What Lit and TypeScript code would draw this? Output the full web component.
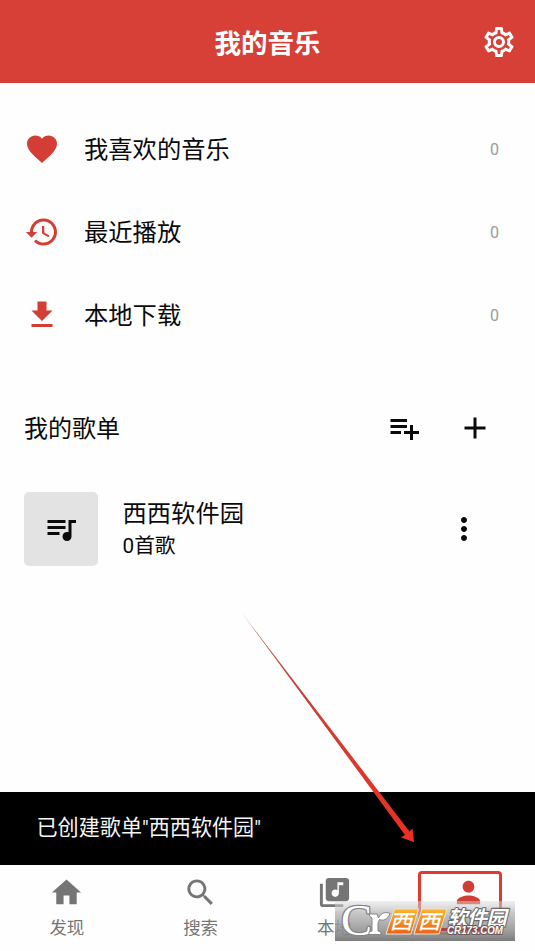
import { LitElement, html, css, svg } from "lit";
import { customElement, property } from "lit/decorators.js";

const ICONS: Record<string, string> = {
  cog: "M12,8A4,4 0 0,1 16,12A4,4 0 0,1 12,16A4,4 0 0,1 8,12A4,4 0 0,1 12,8M12,10A2,2 0 0,0 10,12A2,2 0 0,0 12,14A2,2 0 0,0 14,12A2,2 0 0,0 12,10M10,22C9.75,22 9.54,21.82 9.5,21.58L9.13,18.93C8.5,18.68 7.96,18.34 7.44,17.94L4.95,18.95C4.73,19.03 4.46,18.95 4.34,18.73L2.34,15.27C2.21,15.05 2.27,14.78 2.46,14.63L4.57,12.97L4.5,12L4.57,11L2.46,9.37C2.27,9.22 2.21,8.95 2.34,8.73L4.34,5.27C4.46,5.05 4.73,4.96 4.95,5.05L7.44,6.05C7.96,5.66 8.5,5.32 9.13,5.07L9.5,2.42C9.54,2.18 9.75,2 10,2H14C14.25,2 14.46,2.18 14.5,2.42L14.87,5.07C15.5,5.32 16.04,5.66 16.56,6.05L19.05,5.05C19.27,4.96 19.54,5.05 19.66,5.27L21.66,8.73C21.79,8.95 21.73,9.22 21.54,9.37L19.43,11L19.5,12L19.43,13L21.54,14.63C21.73,14.78 21.79,15.05 21.66,15.27L19.66,18.73C19.54,18.95 19.27,19.04 19.05,18.95L16.56,17.95C16.04,18.34 15.5,18.68 14.87,18.93L14.5,21.58C14.46,21.82 14.25,22 14,22H10M11.25,4L10.88,6.61C9.68,6.86 8.62,7.5 7.85,8.39L5.44,7.35L4.69,8.65L6.8,10.2C6.4,11.37 6.4,12.64 6.8,13.8L4.68,15.36L5.43,16.66L7.86,15.62C8.63,16.5 9.68,17.14 10.87,17.38L11.24,20H12.76L13.13,17.39C14.32,17.14 15.37,16.5 16.14,15.62L18.57,16.66L19.32,15.36L17.2,13.81C17.6,12.64 17.6,11.37 17.2,10.2L19.31,8.65L18.56,7.35L16.15,8.39C15.38,7.5 14.32,6.86 13.12,6.62L12.75,4H11.25Z",
  heart: "M12 21.35l-1.45-1.32C5.4 15.36 2 12.28 2 8.5 2 5.42 4.42 3 7.5 3c1.74 0 3.41.81 4.5 2.09C13.09 3.81 14.76 3 16.5 3 19.58 3 22 5.42 22 8.5c0 3.78-3.4 6.86-8.55 11.54L12 21.35z",
  history: "M13 3c-4.97 0-9 4.03-9 9H1.2l3.7 3.7.07.14L8.8 12H6c0-3.87 3.13-7 7-7s7 3.13 7 7-3.13 7-7 7c-1.93 0-3.68-.79-4.94-2.06l-1.42 1.42C8.27 19.99 10.51 21 13 21c4.97 0 9-4.03 9-9s-4.03-9-9-9zm-1 5v5l4.28 2.54.72-1.21-3.5-2.08V8H12z",
  download: "M19 9h-4V3H9v6H5l7 7 7-7zM5 18v2h14v-2H5z",
  playlistAdd: "M14 10H3v2h11v-2zm0-4H3v2h11V6zm4 8v-4h-2v4h-4v2h4v4h2v-4h4v-2h-4zM3 16h7v-2H3v2z",
  add: "M19 13h-6v6h-2v-6H5v-2h6V5h2v6h6v2z",
  queue: "M15 6H3v2h12V6zm0 4H3v2h12v-2zM3 16h8v-2H3v2zM17 6v8.18c-.31-.11-.65-.18-1-.18-1.66 0-3 1.34-3 3s1.34 3 3 3 3-1.34 3-3V8h3V6h-5z",
  more: "M12 8c1.1 0 2-.9 2-2s-.9-2-2-2-2 .9-2 2 .9 2 2 2zm0 2c-1.1 0-2 .9-2 2s.9 2 2 2 2-.9 2-2-.9-2-2-2zm0 6c-1.1 0-2 .9-2 2s.9 2 2 2 2-.9 2-2-.9-2-2-2z",
  home: "M10 20v-6h4v6h5v-8h3L12 3 2 12h3v8z",
  search: "M15.5 14h-.79l-.28-.27C15.41 12.59 16 11.11 16 9.5 16 5.91 13.09 3 9.5 3S3 5.91 3 9.5 5.91 16 9.5 16c1.61 0 3.09-.59 4.23-1.57l.27.28v.79l5 4.99L20.49 19l-4.99-5zm-6 0C7.01 14 5 11.99 5 9.5S7.01 5 9.5 5 14 7.01 14 9.5 11.99 14 9.5 14z",
  library: "M20 2H8c-1.1 0-2 .9-2 2v12c0 1.1.9 2 2 2h12c1.1 0 2-.9 2-2V4c0-1.1-.9-2-2-2zm-2 5h-3v5.5c0 1.38-1.12 2.5-2.5 2.5S10 13.88 10 12.5s1.12-2.5 2.5-2.5c.57 0 1.08.19 1.5.51V5h4v2zM4 6H2v14c0 1.1.9 2 2 2h14v-2H4V6z",
  person: "M12 12c2.21 0 4-1.79 4-4s-1.79-4-4-4-4 1.79-4 4 1.79 4 4 4zm0 2c-2.67 0-8 1.34-8 4v2h16v-2c0-2.66-5.33-4-8-4z",
};

@customElement("md-icon")
class MdIcon extends LitElement {
  @property() name = "";
  static styles = css`
    :host { display: block; width: 36px; height: 36px; flex: none; }
    svg { display: block; width: 100%; height: 100%; fill: currentColor; }
  `;
  render() {
    return html`<svg viewBox="0 0 24 24">${svg`<path d=${ICONS[this.name] ?? ""}></path>`}</svg>`;
  }
}

@customElement("site-mark")
class SiteMark extends LitElement {
  static styles = css`
    :host { display: block; width: 180px; height: 40px; }
    svg { display: block; overflow: visible; }
    text { paint-order: stroke; stroke-linejoin: round; }
    .cjk { font-family: "Noto Sans CJK SC", sans-serif; font-weight: 700; }
    .c { font: 45px "Liberation Serif", serif; fill: #fff; stroke: #858585; stroke-width: 2.6px; }
    .r { fill: #fff; stroke: #858585; stroke-width: 1px; stroke-linejoin: round; }
    .plate { fill: url(#orange); stroke: #f4e5d2; stroke-width: 1; }
    .xi { font-size: 20px; font-weight: 500; fill: #fff; }
    .soft { font-size: 20px; fill: #fff; stroke: #696969; stroke-width: 2.2px; }
    .site { font: italic bold 10px "Liberation Sans", sans-serif; fill: #fff; stroke: #6b5555; stroke-width: 1.8px; }
  `;
  render() {
    return html`
      <svg width="180" height="40" viewBox="0 0 180 40">
        <defs>
          <linearGradient id="shade" x1="0" y1="0" x2="0" y2="1">
            <stop offset="0" stop-color="#ddd" stop-opacity=".45"></stop>
            <stop offset=".3" stop-color="#b4b4b4" stop-opacity=".75"></stop>
            <stop offset=".75" stop-color="#8c8c8c" stop-opacity=".85"></stop>
            <stop offset="1" stop-color="#7c7c7c"></stop>
          </linearGradient>
          <linearGradient id="orange" x1="0" y1="0" x2="0" y2="1">
            <stop offset="0" stop-color="#f8b62c"></stop>
            <stop offset="1" stop-color="#ec6418"></stop>
          </linearGradient>
        </defs>
        <rect width="180" height="40" fill="url(#shade)"></rect>
        <path d="M102 28.5H164" stroke="#a8444a" stroke-width="3"></path>
        <text class="c" x="6" y="34" textLength="31" lengthAdjust="spacingAndGlyphs">C</text>
        <path class="r" d="M34.5 13H42L43.5 17C46 11.500 51 10.500 55 12.500C52 19 48 20 44.500 18.500L43 22V30L46 31V33.500H34V31L37 30V17L34.5 15Z"></path>
        <path class="plate" d="M59.500 8H83.500L76 33H51Z"></path>
        <path class="plate" d="M87 8H112L104 33H79Z"></path>
        <g transform="skewX(-14)">
          <text class="cjk xi" x="61.500" y="28" textLength="23" lengthAdjust="spacingAndGlyphs">西</text>
          <text class="cjk xi" x="89.500" y="28" textLength="23" lengthAdjust="spacingAndGlyphs">西</text>
          <text class="cjk soft" x="118.500" y="24" textLength="59">软件园</text>
        </g>
        <text class="site" x="112" y="33" textLength="56" lengthAdjust="spacingAndGlyphs">CR173.COM</text>
      </svg>`;
  }
}

@customElement("app-root")
class AppRoot extends LitElement {
  static styles = css`
    :host {
      display: block; position: relative; width: 535px; height: 951px; overflow: hidden;
      background: #fefefe; color: #0a0a0a;
      font-family: Roboto, "Noto Sans CJK SC", sans-serif;
    }
    .page { display: flex; flex-direction: column; height: 100%; }
    .bar { height: 83px; background: #d64036; color: #fff; display: grid; grid-template-columns: 1fr auto 1fr; align-items: center; flex: none; }
    .title { grid-column: 2; font-size: 26.5px; font-weight: 700; line-height: 36px; padding-top: 4px; }
    .bar md-icon { justify-self: end; margin-right: 18px; }
    .links { padding-top: 24px; }
    .link { height: 83.2px; display: flex; align-items: center; padding: 0 36px 0 23.5px; }
    .link md-icon { color: #d43d33; }
    .name { flex: 1; margin-left: 24.5px; font-size: 24.3px; line-height: 36px; padding-top: 2px; }
    .count { font-size: 16px; color: #9a9a9a; padding-top: 1px; }
    .head { display: flex; align-items: center; height: 72px; margin-top: 35.4px; padding: 0 42px 0 24px; }
    .heading { flex: 1; font-size: 24px; padding-bottom: 2px; }
    .head md-icon + md-icon { margin-left: 35px; }
    .item { display: flex; align-items: center; margin-top: 28px; height: 74px; padding: 0 53.5px 0 24px; }
    .cover { width: 74px; height: 74px; border-radius: 5px; background: #e3e3e3; display: grid; place-items: center; }
    .text { flex: 1; margin-left: 24.5px; }
    .list-name { font-size: 24.3px; line-height: 34px; }
    .songs { font-size: 20.7px; line-height: 30px; }
    .toast { margin-top: auto; height: 73px; flex: none; background: #000; color: #f5f5f5; font-size: 21.1px; line-height: 72px; padding-left: 36.5px; }
    .tabs { height: 86px; flex: none; display: grid; grid-template-columns: repeat(4, 1fr); color: #757575; }
    .tab { display: flex; flex-direction: column; align-items: center; padding-top: 10px; }
    .tab md-icon { width: 35px; height: 35px; }
    .tab .label { font-size: 17.5px; line-height: 24px; margin-top: 6px; }
    .tab.on { color: #d33c32; }
    .arrow { position: absolute; left: 0; top: 0; width: 535px; height: 951px; pointer-events: none; }
    .focus { position: absolute; left: 418px; top: 871px; width: 78px; height: 58px; border: 3px solid #dc3b30; border-radius: 4px; }
    .mark { position: absolute; left: 335px; top: 901px; }
  `;
  render() {
    const links = [["heart", "我喜欢的音乐"], ["history", "最近播放"], ["download", "本地下载"]];
    const tabs = [["home", "发现"], ["search", "搜索"], ["library", "本地"], ["person", ""]];
    return html`
      <div class="page">
        <header class="bar"><div class="title">我的音乐</div><md-icon name="cog"></md-icon></header>
        <div class="links">
          ${links.map(([icon, name]) => html`
            <div class="link"><md-icon name=${icon}></md-icon><div class="name">${name}</div><div class="count">0</div></div>`)}
        </div>
        <div class="head"><div class="heading">我的歌单</div><md-icon name="playlistAdd"></md-icon><md-icon name="add"></md-icon></div>
        <div class="item">
          <div class="cover"><md-icon name="queue"></md-icon></div>
          <div class="text"><div class="list-name">西西软件园</div><div class="songs">0首歌</div></div>
          <md-icon name="more"></md-icon>
        </div>
        <div class="toast">已创建歌单"西西软件园"</div>
        <nav class="tabs">
          ${tabs.map(([icon, label]) => html`
            <div class="tab ${icon === "person" ? "on" : ""}"><md-icon name=${icon}></md-icon><div class="label">${label}</div></div>`)}
        </nav>
      </div>
      <svg class="arrow" viewBox="0 0 535 951">
        <defs>
          <linearGradient id="shaft" gradientUnits="userSpaceOnUse" x1="242" y1="612" x2="414" y2="842">
            <stop offset="0" stop-color="#b9837c"></stop>
            <stop offset=".25" stop-color="#c04438"></stop>
            <stop offset="1" stop-color="#ee2f20"></stop>
          </linearGradient>
        </defs>
        <path fill="url(#shaft)" d="M241.500 612.500L409.500 831.500L412.500 828.500L414 842L401 837.500L405 835Z"></path>
      </svg>
      <div class="focus"></div>
      <site-mark class="mark"></site-mark>`;
  }
}
